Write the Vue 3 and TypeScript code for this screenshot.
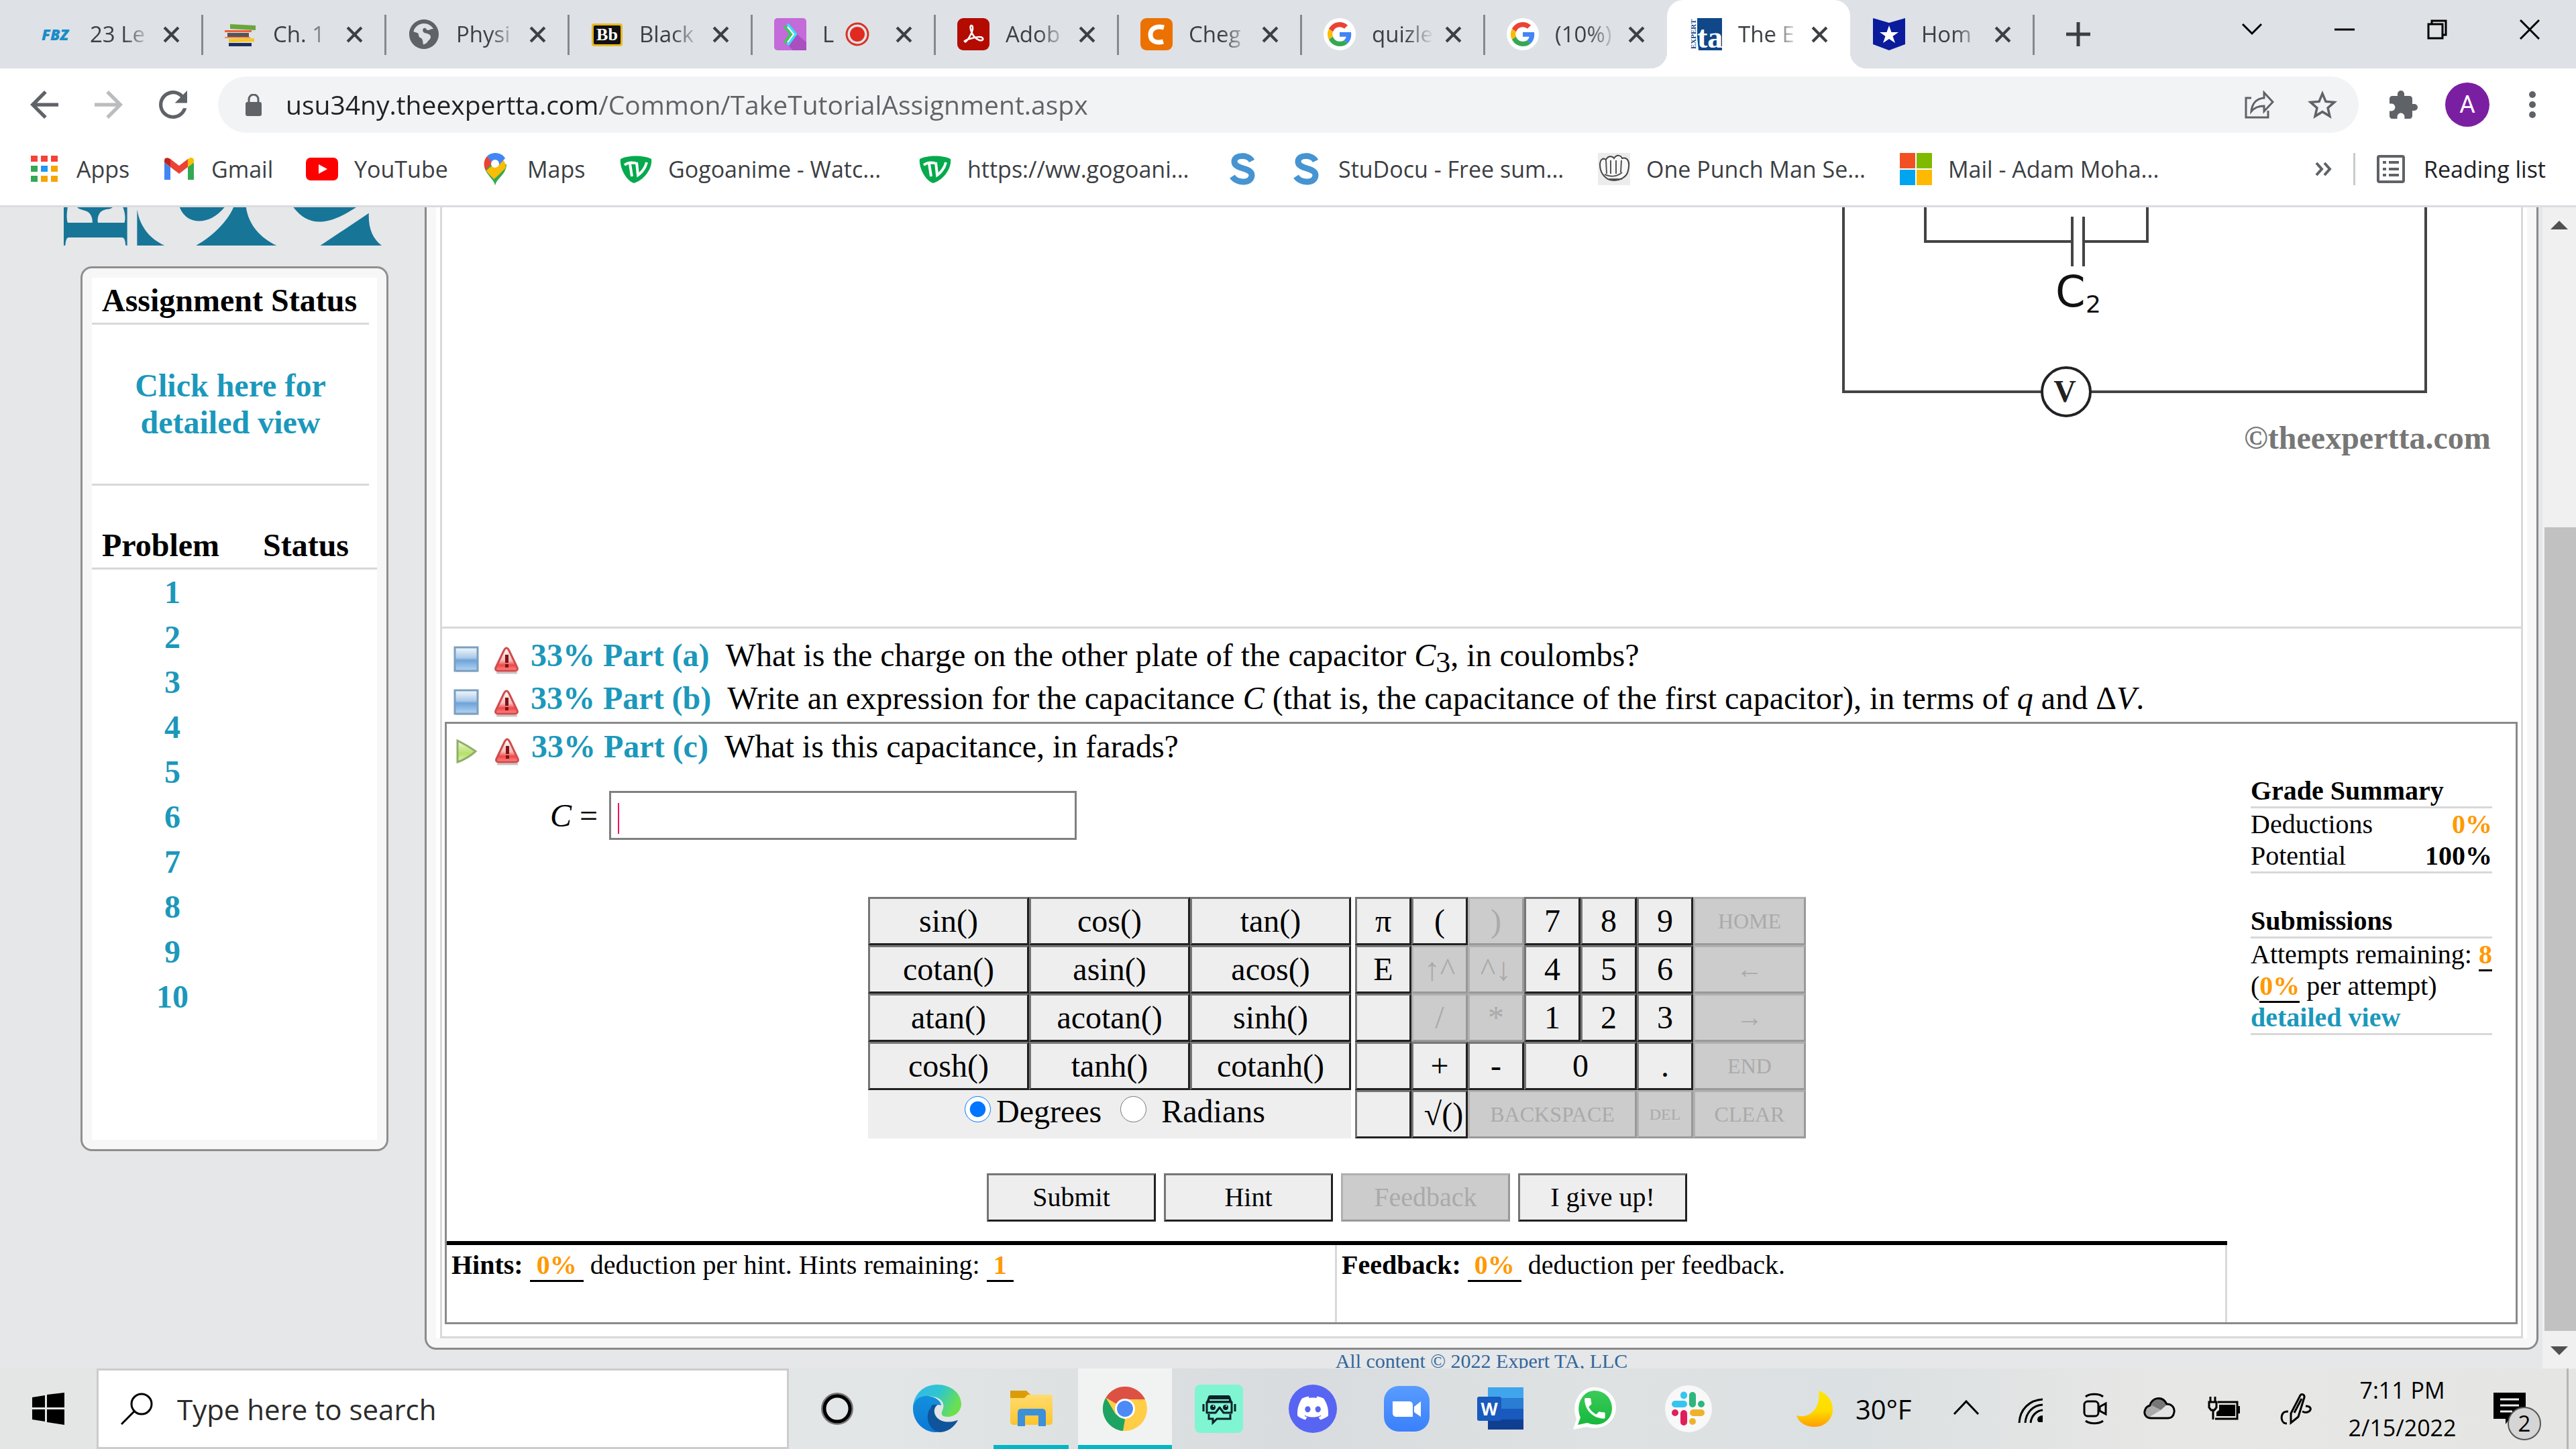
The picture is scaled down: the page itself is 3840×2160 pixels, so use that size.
<script setup lang="ts">
import { ref } from 'vue'

interface Tab { title: string; icon: string; active?: boolean; recording?: boolean }
interface Bookmark { label: string; icon: string; width: number }
interface Key { label: string; off?: boolean; span?: number; size?: string }

const tabs: Tab[] = [
  { title: '23 Le', icon: 'fbz' },
  { title: 'Ch. 1', icon: 'books' },
  { title: 'Physi', icon: 'globe' },
  { title: 'Black', icon: 'bb' },
  { title: 'L', icon: 'lens', recording: true },
  { title: 'Adob', icon: 'adobe' },
  { title: 'Cheg', icon: 'chegg' },
  { title: 'quizle', icon: 'google' },
  { title: '(10%)', icon: 'google' },
  { title: 'The E', icon: 'expert', active: true },
  { title: 'Hom', icon: 'badge' },
]

const bookmarks: Bookmark[] = [
  { label: 'Apps', icon: 'apps', width: 201 },
  { label: 'Gmail', icon: 'gmail', width: 213 },
  { label: 'YouTube', icon: 'youtube', width: 258 },
  { label: 'Maps', icon: 'maps', width: 210 },
  { label: 'Gogoanime - Watc...', icon: 'tv', width: 446 },
  { label: 'https://ww.gogoani...', icon: 'tv', width: 458 },
  { label: '', icon: 'studocu', width: 95 },
  { label: 'StuDocu - Free sum...', icon: 'studocu', width: 459 },
  { label: 'One Punch Man Se...', icon: 'fist', width: 450 },
  { label: 'Mail - Adam Moha...', icon: 'microsoft', width: 450 },
]

const functionRows: string[][] = [
  ['sin()', 'cos()', 'tan()'],
  ['cotan()', 'asin()', 'acos()'],
  ['atan()', 'acotan()', 'sinh()'],
  ['cosh()', 'tanh()', 'cotanh()'],
]

const keys: Key[] = [
  { label: 'π' }, { label: '(' }, { label: ')', off: true }, { label: '7' }, { label: '8' }, { label: '9' }, { label: 'HOME', off: true, size: 'small' },
  { label: 'E' }, { label: '↑^', off: true }, { label: '^↓', off: true }, { label: '4' }, { label: '5' }, { label: '6' }, { label: '←', off: true, size: 'arrow' },
  { label: '' }, { label: '/', off: true }, { label: '*', off: true }, { label: '1' }, { label: '2' }, { label: '3' }, { label: '→', off: true, size: 'arrow' },
  { label: '' }, { label: '+' }, { label: '-' }, { label: '0', span: 2 }, { label: '.' }, { label: 'END', off: true, size: 'small' },
  { label: '' }, { label: '\u00a0√()' }, { label: 'BACKSPACE', off: true, span: 3, size: 'small' }, { label: 'DEL', off: true, size: 'tiny' }, { label: 'CLEAR', off: true, size: 'small' },
]

const apps = [
  { icon: 'edge', name: 'Edge' },
  { icon: 'explorer', name: 'File Explorer', state: 'open' },
  { icon: 'chrome', name: 'Chrome', state: 'focused' },
  { icon: 'robot', name: 'Streamlabs' },
  { icon: 'discord', name: 'Discord' },
  { icon: 'zoom', name: 'Zoom' },
  { icon: 'word', name: 'Word' },
  { icon: 'whatsapp', name: 'WhatsApp' },
  { icon: 'slack', name: 'Slack' },
]

const trayIcons = ['caret', 'wifi', 'meet', 'cloud', 'battery']
const url = ref('usu34ny.theexpertta.com/Common/TakeTutorialAssignment.aspx')
const query = ref('')
const answer = ref('')
const angle = ref('deg')
</script>

<template>
  <div class="desktop">
    <svg class="sprite" width="0" height="0" aria-hidden="true">
      <defs>
        <linearGradient id="gBlue" x1="0" y1="0" x2="0" y2="1"><stop offset="0" stop-color="#f4f9fd" /><stop offset=".45" stop-color="#a9c8e8" /><stop offset=".55" stop-color="#6ea3d8" /><stop offset="1" stop-color="#b5d6f5" /></linearGradient>
        <linearGradient id="gWarn" x1="0" y1="0" x2="0" y2="1"><stop offset="0" stop-color="#fff" /><stop offset=".55" stop-color="#f7b9b9" /><stop offset=".75" stop-color="#f04848" /><stop offset="1" stop-color="#ff8a8a" /></linearGradient>
        <linearGradient id="gPlay" x1="0" y1="0" x2="0" y2="1"><stop offset="0" stop-color="#f1f8dc" /><stop offset=".6" stop-color="#b5e06a" /><stop offset="1" stop-color="#dff2b4" /></linearGradient>
        <linearGradient id="gEdgeA" x1="0" y1="0" x2="1" y2="0.4"><stop offset="0" stop-color="#35b4f0" /><stop offset=".55" stop-color="#2fc6cf" /><stop offset="1" stop-color="#6be04f" /></linearGradient>
        <linearGradient id="gEdgeB" x1="0" y1="0" x2="0" y2="1"><stop offset="0" stop-color="#1390dc" /><stop offset="1" stop-color="#0a78d6" /></linearGradient>
        <linearGradient id="gMoon" x1="0" y1="0" x2="0" y2="1"><stop offset="0" stop-color="#ffe600" /><stop offset=".55" stop-color="#ffdc00" /><stop offset="1" stop-color="#ff9d00" /></linearGradient>
        <linearGradient id="gZoom" x1="0" y1="0" x2="0" y2="1"><stop offset="0" stop-color="#589cff" /><stop offset="1" stop-color="#3a80fb" /></linearGradient>
        <linearGradient id="gWa" x1="0" y1="0" x2="0" y2="1"><stop offset="0" stop-color="#3ccb58" /><stop offset="1" stop-color="#16b83c" /></linearGradient>
        <linearGradient id="gFolder" x1="0" y1="0" x2="0" y2="1"><stop offset="0" stop-color="#ffdb70" /><stop offset="1" stop-color="#fdc52c" /></linearGradient>
      </defs>

      <symbol id="i-books" viewBox="0 0 48 48">
        <path d="M8 9l38 2v7L8 16z" fill="#6aa63c" /><path d="M0 18h40v3H0z" fill="#f0603a" /><path d="M4 22h32v6H4z" fill="#555" /><path d="M0 28h38v2H0z" fill="#f58a5a" /><path d="M6 31l38-1v5l-38 1z" fill="#f7c521" /><path d="M6 37h34v5H6z" fill="#1d2f5c" />
      </symbol>
      <symbol id="i-globe" viewBox="0 0 24 24"><path fill="#5f6368" d="M12 1C5.900 1 1 5.900 1 12s4.900 11 11 11 11-4.900 11-11S18.100 1 12 1zm0 3c3 0 5.500 1.500 7 4-2 0-3 1-4 1-1.500 0-1-2-3-1.500-1.500.5-1 3 .5 3.500 2 .5 4.500 1 4.500 3s-2 2.500-2.500 4c-1 1-2 1.500-3 1.700-.5-2-.2-3-1-4.200-.8-1-2.500-1-2.500-3S6 11 4.200 10C5 6.500 8.200 4 12 4z" /></symbol>
      <symbol id="i-bb" viewBox="0 0 48 48"><rect x="1" y="8" width="46" height="34" rx="4" fill="#e8b923" /><rect x="4" y="11" width="40" height="28" rx="2" fill="#111" /></symbol>
      <symbol id="i-lens" viewBox="0 0 48 48"><rect width="48" height="48" rx="5" fill="#c36bd8" /><path d="M22 42l12-18 14 12v12H28z" fill="#a94fc0" /><path d="M15 12l10 12-10 13" fill="none" stroke="#1fe03c" stroke-width="3" /><path d="M20 9l12 15-12 16" fill="none" stroke="#2ee6f5" stroke-width="4" /><path d="M20 13l9 11-9 12" fill="none" stroke="#fff" stroke-width="2" /></symbol>
      <symbol id="i-rec" viewBox="0 0 36 36"><circle cx="18" cy="18" r="16" fill="none" stroke="#d93025" stroke-width="3" /><circle cx="18" cy="18" r="11" fill="#e02a1f" /></symbol>
      <symbol id="i-adobe" viewBox="0 0 48 48"><rect width="48" height="48" rx="9" fill="#b30b00" /><path d="M11 36c4-2 9-10 11-16 2-5 1-9-1-9s-2 4 0 9c2 6 7 11 12 13 4 1 6-1 5-3-2-3-10-2-16 0-5 1-10 3-12 5" fill="none" stroke="#fff" stroke-width="2.500" /></symbol>
      <symbol id="i-chegg" viewBox="0 0 48 48"><rect width="48" height="48" rx="9" fill="#eb7100" /><path d="M35 14c-11-3-20 1-20 11 0 9 8 13 19 10" fill="none" stroke="#fff" stroke-width="7" /></symbol>
      <symbol id="i-google" viewBox="0 0 48 48"><circle cx="24" cy="24" r="24" fill="#fff" /><g transform="translate(6 6) scale(.75)">
        <path fill="#EA4335" d="M24 9.500c3.540 0 6.710 1.220 9.210 3.600l6.850-6.850C35.900 2.380 30.470 0 24 0 14.620 0 6.510 5.380 2.560 13.220l7.980 6.190C12.430 13.720 17.740 9.500 24 9.500z" />
        <path fill="#4285F4" d="M46.980 24.550c0-1.570-.15-3.090-.38-4.550H24v9.020h12.940c-.58 2.960-2.260 5.480-4.780 7.180l7.730 6c4.510-4.180 7.090-10.360 7.090-17.650z" />
        <path fill="#FBBC05" d="M10.530 28.590c-.48-1.450-.76-2.990-.76-4.590s.27-3.140.76-4.590l-7.980-6.190C.92 16.460 0 20.120 0 24c0 3.880.92 7.540 2.560 10.780l7.970-6.190z" />
        <path fill="#34A853" d="M24 48c6.480 0 11.930-2.130 15.890-5.810l-7.730-6c-2.150 1.450-4.920 2.300-8.160 2.300-6.260 0-11.570-4.220-13.470-9.910l-7.980 6.190C6.510 42.620 14.620 48 24 48z" /></g></symbol>
      <symbol id="i-expert" viewBox="0 0 48 48"><path d="M11 0h37v48H13l-2-20z" fill="#0f4788" /></symbol>
      <symbol id="i-badge" viewBox="0 0 48 48"><path d="M0 0l24 7 24-7v39l-24 9-24-9z" fill="#0a1c9c" /><path d="M24 11l3.500 10H38l-8.500 6 3.500 10-9-6-9 6 3.500-10L10 21h10.500z" fill="#fff" /></symbol>
      <symbol id="i-apps" viewBox="0 0 48 48">
        <path fill="#f44336" d="M4 4h10v9H4zM19 4h10v9H19zM34 4h10v9H34z" /><path fill="#34a853" d="M4 19h10v9H4zM4 34h10v9H4z" /><path fill="#2196f3" d="M19 19h10v9H19z" /><path fill="#f5a500" d="M34 19h10v9H34zM19 34h10v9H19zM34 34h10v9H34z" />
      </symbol>
      <symbol id="i-gmail" viewBox="0 0 48 48"><path fill="#4285f4" d="M2 40h9V21L2 14v23z" /><path fill="#34a853" d="M37 40h9V14l-9 7z" /><path fill="#ea4335" d="M11 21V9l13 10L37 9v12L24 31z" /><path fill="#fbbc04" d="M37 9v12l9-7v-3c0-4-4-5-7-3z" /><path fill="#c5221f" d="M2 14l9 7V9L9 8c-4-2-7 0-7 3z" /></symbol>
      <symbol id="i-youtube" viewBox="0 0 48 48"><rect y="7" width="48" height="34" rx="7" fill="#f00" /><path d="M19 17l13 7-13 7z" fill="#fff" /></symbol>
      <symbol id="i-maps" viewBox="0 0 48 48"><path fill="#34a853" d="M24 48C22 38 8 32 8 17h33c0 15-15 21-17 31z" /><path fill="#fbbc04" d="M11 26l22-18c7 5 9 12 4 20L22 39C18 34 13 31 11 26z" /><path fill="#34a853" d="M22 40l17-17c-1 10-13 15-15 25z" /><path fill="#ea4335" d="M12 5l9 8-11 13c-4-8-3-15 2-21z" /><path fill="#4285f4" d="M12 5C20-3 34-1 39 8L26 22z" /><circle cx="24" cy="16" r="6" fill="#fff" /></symbol>
      <symbol id="i-tv" viewBox="0 0 48 48"><path d="M1 9C12 3 36 3 47 9c2 15-12 32-26 36C10 42-1 22 1 9z" fill="#06a94d" /><path d="M7 18c5-4 9-4 17-3M15 16l3 19M25 14l2 19C34 28 38 22 40 14" fill="none" stroke="#fff" stroke-width="4" /></symbol>
      <symbol id="i-studocu" viewBox="0 0 48 48"><path d="M38 12C33 2 12 2 12 13c0 12 26 8 26 20 0 13-22 13-29 2" fill="none" stroke="#4694d1" stroke-width="9" /></symbol>
      <symbol id="i-fist" viewBox="0 0 48 48"><rect width="48" height="48" fill="#ececec" /><path d="M3 18c0-9 5-11 9-8 3-6 9-6 12-2 4-6 10-5 12 0 6-2 11 2 10 12-1 12-5 15-10 18-8 4-18 4-24-1C6 32 3 27 3 18z" fill="#f8f8f8" stroke="#444" stroke-width="2" /><path d="M12 11l1 20M19 11v20M27 11v20M35 11l-1 18M10 32c8 4 18 4 26-3M14 39h22" fill="none" stroke="#555" stroke-width="2" /></symbol>
      <symbol id="i-microsoft" viewBox="0 0 48 48"><path fill="#f25022" d="M0 0h23v23H0z" /><path fill="#7fba00" d="M25 0h23v23H25z" /><path fill="#00a4ef" d="M0 25h23v23H0z" /><path fill="#ffb900" d="M25 25h23v23H25z" /></symbol>

      <symbol id="i-stop" viewBox="0 0 38 42"><path d="M33 6v31H4" fill="none" stroke="#bbb" stroke-width="3" /><rect x="2" y="2" width="34" height="35" fill="url(#gBlue)" stroke="#7b9fc0" stroke-width="3" /></symbol>
      <symbol id="i-play" viewBox="0 0 38 42"><path d="M5 5c8 4 20 11 27 16-6 6-18 13-27 16z" fill="url(#gPlay)" stroke="#8fae6a" stroke-width="3" /></symbol>
      <symbol id="i-warn" viewBox="0 0 38 42"><path d="M4 40h31" stroke="#c9c3c3" stroke-width="3" /><path d="M19 3c2 0 3 2 4 4l12 25c1 3 0 5-3 5H6c-3 0-4-2-3-5L15 7c1-2 2-4 4-4z" fill="url(#gWarn)" stroke="#cf4c4c" stroke-width="3" /><path d="M17 13h5v12h-5zM17 27h5v5h-5z" fill="#7c1414" /></symbol>

      <symbol id="i-edge" viewBox="0 0 72 72">
        <path d="M36 0C16 0 1 14 0 34c5-12 18-18 30-16 14 2 18 12 14 20-3 6-1 10 7 10 12 0 21-8 21-20C71 12 56 0 36 0z" fill="url(#gEdgeA)" /><path d="M0 36C0 22 12 16 22 17c12 1 20 8 20 14-10-4-17 4-17 12 0 12 8 22 22 23-5 4-10 5-14 5C14 70 0 54 0 36z" fill="url(#gEdgeB)" /><path d="M29 30c-8 10-4 28 12 33 10 2 20-2 26-10-14 5-29 3-34-8-2-5-2-11 4-15z" fill="#10549c" /><path d="M25 36c-8 15 0 32 14 35 12 0 22-7 28-18C55 62 32 62 25 36z" fill="#10549c" />
      </symbol>
      <symbol id="i-explorer" viewBox="0 0 72 72"><path d="M5 9h24l6 6v12H5z" fill="#dc9c08" /><path d="M5 20h21l5-5h33c2 0 4 1 4 3v38c0 2-2 4-4 4H9c-2 0-4-2-4-4z" fill="url(#gFolder)" /><path d="M16 62V42c0-4 2-6 6-6h30c4 0 6 2 6 6v20H47V46H27v16z" fill="#3c8fd9" /></symbol>
      <symbol id="i-chrome" viewBox="0 0 72 72"><circle cx="36" cy="36" r="33" fill="#ffcd46" /><path d="M36 36L7.400 19.500A33 33 0 0 1 64.600 19.500L66 22H36z" fill="#dd5144" /><path d="M7.400 19.500L22 44l14 8-3 17A33 33 0 0 1 7.400 19.500z" fill="#1da462" /><circle cx="36" cy="36" r="15" fill="#fff" /><circle cx="36" cy="36" r="12" fill="#4c8bf5" /></symbol>
      <symbol id="i-robot" viewBox="0 0 72 72">
        <rect width="72" height="72" rx="8" fill="#80f5d2" />
        <path d="M17 27l3-9c1-2 2-2 4-2h25c2 0 3 0 4 2l3 9z" fill="#0b2229" /><path d="M22 23h29" stroke="#80f5d2" stroke-width="2" />
        <path d="M18 26h37v16H43l-6-8-6 8H18z" fill="#80f5d2" stroke="#0b2229" stroke-width="3" stroke-linejoin="round" />
        <path d="M13 29v11M60 29v11" stroke="#0b2229" stroke-width="3" />
        <circle cx="27" cy="34" r="4" fill="#0b2229" /><circle cx="46" cy="34" r="4" fill="#0b2229" /><circle cx="28" cy="32" r="1" fill="#fff" /><circle cx="47" cy="32" r="1" fill="#fff" />
        <path d="M21 44v7h6v6l6-6h20v-7" fill="none" stroke="#0b2229" stroke-width="3" />
      </symbol>
      <symbol id="i-discord" viewBox="0 0 72 72"><circle cx="36" cy="36" r="36" fill="#5865f2" /><path transform="translate(13 12) scale(1.920)" fill="#fff" d="M20.317 4.370a19.800 19.800 0 00-4.885-1.515.074.074 0 00-.079.037c-.211.375-.445.865-.608 1.250-1.845-.276-3.680-.276-5.487 0-.164-.393-.406-.874-.618-1.250a.077.077 0 00-.079-.037 19.740 19.740 0 00-4.885 1.515.070.070 0 00-.032.028C.533 9.046-.319 13.580.099 18.058a.082.082 0 00.031.056c2.053 1.508 4.041 2.423 5.993 3.029a.078.078 0 00.084-.028c.462-.630.873-1.295 1.226-1.994a.076.076 0 00-.042-.106c-.653-.248-1.274-.550-1.872-.892a.077.077 0 01-.008-.128c.126-.094.252-.192.372-.291a.074.074 0 01.078-.011c3.928 1.793 8.180 1.793 12.061 0a.074.074 0 01.079.010c.120.099.246.198.373.292a.077.077 0 01-.007.128 12.300 12.300 0 01-1.873.891.077.077 0 00-.041.107c.360.698.772 1.363 1.225 1.993a.076.076 0 00.084.029c1.961-.607 3.950-1.522 6.002-3.029a.077.077 0 00.031-.055c.500-5.177-.838-9.674-3.549-13.660a.061.061 0 00-.031-.029zM8.020 15.331c-1.183 0-2.157-1.086-2.157-2.419 0-1.333.956-2.419 2.157-2.419 1.211 0 2.176 1.095 2.157 2.419 0 1.333-.956 2.419-2.157 2.419zm7.975 0c-1.183 0-2.157-1.086-2.157-2.419 0-1.333.955-2.419 2.157-2.419 1.211 0 2.176 1.095 2.157 2.419 0 1.333-.946 2.419-2.157 2.419z" /></symbol>
      <symbol id="i-zoom" viewBox="0 0 72 72"><rect x="2" y="2" width="68" height="68" rx="22" fill="url(#gZoom)" /><path d="M15 25h24c4 0 6 2 6 6v17H21c-4 0-6-2-6-6zM47 33l10-8v23l-10-7z" fill="#fff" /></symbol>
      <symbol id="i-word" viewBox="0 0 72 72"><path d="M17 4h53v17H17z" fill="#41a5ee" /><path d="M17 20h53v16H17z" fill="#2b7cd3" /><path d="M17 36h53v16H17z" fill="#185abd" /><path d="M17 52h53v15H17z" fill="#103f91" /><rect x="1" y="18" width="36" height="36" rx="3" fill="#185abd" /></symbol>
      <symbol id="i-whatsapp" viewBox="0 0 72 72"><path d="M4 67l5-16C0 28 14 4 36 4c18 0 32 14 32 30 0 20-18 36-44 29z" fill="#fff" /><path d="M11 60l4-11C7 30 18 9 36 9c15 0 26 12 26 26 0 18-16 30-37 22z" fill="url(#gWa)" /><path transform="translate(16 15) scale(1.700)" fill="#fff" d="M6.620 10.790c1.440 2.830 3.760 5.140 6.590 6.590l2.200-2.200c.27-.27.67-.36 1.020-.24 1.120.37 2.330.57 3.570.57.55 0 1 .45 1 1V20c0 .55-.45 1-1 1-9.390 0-17-7.610-17-17 0-.55.45-1 1-1h3.500c.55 0 1 .45 1 1 0 1.250.2 2.450.57 3.570.11.35.03.74-.25 1.020l-2.200 2.200z" /></symbol>
      <symbol id="i-slack" viewBox="0 0 72 72"><circle cx="36" cy="36" r="35" fill="#f8f8f8" /><g stroke-width="10" stroke-linecap="round"><path d="M29 15.500v1M16 29h13" stroke="#36c5f0" /><path d="M42 16v13M55 29v0" stroke="#2eb67d" /><path d="M43 42h12M42 55v0" stroke="#ecb22e" /><path d="M29 43v13M16 42v0" stroke="#e01e5a" /></g></symbol>

      <symbol id="i-caret" viewBox="0 0 48 48"><path d="M6 32l18-19 18 19" fill="none" stroke="#000" stroke-width="3" /></symbol>
      <symbol id="i-wifi" viewBox="0 0 48 48"><g fill="none" stroke="#000" stroke-width="3"><path d="M7 45C8 25 22 11 42 10" /><path d="M16 45c1-15 11-26 26-27" /><path d="M24 45c1-10 8-18 18-19" /></g><path d="M42 34v10h-6c-4-3-2-10 6-10z" /></symbol>
      <symbol id="i-meet" viewBox="0 0 48 48"><g fill="none" stroke="#000" stroke-width="3"><rect x="8" y="13" width="21" height="22" rx="5" /><path d="M31 21l9-5v16l-9-5zM10 6c6-5 20-5 26 0M10 42c6 5 20 5 26 0" /></g></symbol>
      <symbol id="i-cloud" viewBox="0 0 48 48"><path d="M12 38C3 38 0 31 3 25c1-4 4-5 7-6C12 8 28 3 35 17c8 0 12 6 11 12-1 6-4 9-9 9z" fill="#e4e4e4" /><path d="M12 19C14 8 30 4 35 18l-9 8z" fill="#777" /><path d="M3 26c2-5 5-7 9-7l14 7L8 37C3 35 1 32 3 26z" fill="#aaa" /><path d="M12 38C3 38 0 31 3 25c1-4 4-5 7-6C12 8 28 3 35 17c8 0 12 6 11 12-1 6-4 9-9 9z" fill="none" stroke="#000" stroke-width="3" /></symbol>
      <symbol id="i-battery" viewBox="0 0 48 48"><path d="M15 14h29v25H11" fill="none" stroke="#000" stroke-width="3" /><path d="M17 18h24v17H13v-6l4-3zM45 20h3v11h-3z" /><path d="M4 6v8M11 6v8M2 14h11v8l-3 4H5l-3-4zM8 26v14" fill="none" stroke="#000" stroke-width="3" /></symbol>
      <symbol id="i-pen" viewBox="0 0 48 48"><g fill="none" stroke="#000" stroke-width="3"><path d="M17 31L31 4c2-3 7-1 6 3L28 36l-11 9z" /><path d="M22 30L33 9M11 46c-9 0-9-11-6-15 2-3 5-3 8-3M39 20c8 0 9 5 5 8-3 2-6 2-10 0" /></g></symbol>
    </svg>

    <header class="browser">
      <div class="tab-strip">
        <div v-for="(tab, i) in tabs" :key="i" class="tab" :class="{ active: tab.active, plain: tabs[i + 1]?.active }">
          <svg class="icon48" viewBox="0 0 48 48">
            <use v-if="tab.icon !== 'fbz'" :href="'#i-' + tab.icon" />
            <text v-if="tab.icon === 'fbz'" x="0" y="33" class="fbz">FBZ</text>
            <text v-if="tab.icon === 'bb'" x="24" y="33" class="bb">Bb</text>
            <template v-if="tab.icon === 'expert'">
              <text x="11" y="44" class="ta">ta</text>
              <text transform="translate(9 46) rotate(-90)" class="ex">EXPERT</text>
            </template>
          </svg>
          <span class="tab-title" :class="{ short: tab.recording }">{{ tab.title }}</span>
          <svg v-if="tab.recording" class="rec"><use href="#i-rec" /></svg>
          <button class="tab-close" aria-label="Close tab"><svg viewBox="0 0 24 24"><path d="M2 2l20 20M22 2L2 22" stroke="#3c4043" stroke-width="4" /></svg></button>
        </div>
        <button class="new-tab" aria-label="New tab"><svg viewBox="0 0 36 36"><path d="M18 0v36M0 18h36" stroke="#3c4043" stroke-width="5" /></svg></button>
        <div class="window-controls">
          <button aria-label="Search tabs"><svg viewBox="0 0 30 30"><path d="M1 7l14 14L29 7" fill="none" stroke="#000" stroke-width="3" /></svg></button>
          <button aria-label="Minimize"><svg viewBox="0 0 30 30"><path d="M0 15h30" stroke="#000" stroke-width="3" /></svg></button>
          <button aria-label="Restore"><svg viewBox="0 0 30 30"><path d="M2 7h21v21H2zM7 7V2h21v21h-5" fill="none" stroke="#000" stroke-width="3" /></svg></button>
          <button aria-label="Close"><svg viewBox="0 0 30 30"><path d="M1 1l28 28M29 1L1 29" stroke="#000" stroke-width="3" /></svg></button>
        </div>
      </div>

      <div class="toolbar">
        <button class="nav" aria-label="Back"><svg viewBox="4 4 16 16"><path fill="#5f6368" d="M20 11H7.830l5.590-5.590L12 4l-8 8 8 8 1.410-1.410L7.830 13H20v-2z" /></svg></button>
        <button class="nav" aria-label="Forward"><svg viewBox="4 4 16 16"><path fill="#babcbe" d="M12 4l-1.410 1.410L16.170 11H4v2h12.170l-5.580 5.590L12 20l8-8z" /></svg></button>
        <button class="nav" aria-label="Reload"><svg viewBox="4 4 16 16"><path fill="#5f6368" d="M17.650 6.350C16.200 4.900 14.210 4 12 4c-4.420 0-7.990 3.580-7.990 8s3.570 8 7.990 8c3.730 0 6.840-2.550 7.730-6h-2.080c-.82 2.330-3.040 4-5.650 4-3.310 0-6-2.690-6-6s2.690-6 6-6c1.660 0 3.140.69 4.220 1.780L13 11h7V4l-2.350 2.350z" /></svg></button>
        <div class="omnibox">
          <svg class="lock" viewBox="0 0 24 33"><path d="M5 13V8a7 7 0 0 1 14 0v5" fill="none" stroke="#5f6368" stroke-width="3" /><rect y="12" width="24" height="21" rx="3" fill="#5f6368" /></svg>
          <input v-model="url" class="url" type="text" aria-label="Address" />
          <button aria-label="Share"><svg viewBox="0 0 44 42"><path d="M10 11H2v29h33V30" fill="none" stroke="#5f6368" stroke-width="3" /><path d="M29 3v8C17 12 11 20 10 31c5-6 11-8 19-8v8l13-14z" fill="none" stroke="#5f6368" stroke-width="3" /></svg></button>
          <button aria-label="Bookmark this page"><svg viewBox="2 2 20 19"><path fill="#5f6368" d="M22 9.240l-7.190-.62L12 2 9.190 8.630 2 9.240l5.460 4.730L5.820 21 12 17.270 18.180 21l-1.630-7.030L22 9.240zM12 15.400l-3.760 2.270 1-4.280-3.320-2.880 4.380-.38L12 6.100l1.710 4.040 4.380.38-3.320 2.880 1 4.280L12 15.400z" /></svg></button>
        </div>
        <button class="puzzle" aria-label="Extensions"><svg viewBox="2 1 21 21"><path fill="#5f6368" d="M20.500 11H19V7c0-1.100-.9-2-2-2h-4V3.500a2.500 2.500 0 0 0-5 0V5H4c-1.100 0-2 .9-2 2v3.800h1.500c1.490 0 2.700 1.210 2.700 2.700S4.990 16.200 3.500 16.200H2V20c0 1.100.9 2 2 2h3.800v-1.500c0-1.490 1.210-2.700 2.700-2.700s2.700 1.210 2.700 2.700V22H17c1.100 0 2-.9 2-2v-4h1.500a2.500 2.500 0 0 0 0-5z" /></svg></button>
        <button class="avatar">A</button>
        <button class="dots" aria-label="Menu"><svg viewBox="0 0 10 40"><circle cx="5" cy="5" r="5" fill="#5f6368" /><circle cx="5" cy="20" r="5" fill="#5f6368" /><circle cx="5" cy="35" r="5" fill="#5f6368" /></svg></button>
      </div>

      <nav class="bookmarks">
        <a v-for="(b, i) in bookmarks" :key="i" href="#" :style="{ width: b.width + 'px' }" :aria-label="b.label || 'StuDocu'">
          <svg class="icon48"><use :href="'#i-' + b.icon" /></svg>{{ b.label }}
        </a>
        <button class="more" aria-label="More bookmarks"><svg viewBox="0 0 26 20"><path d="M2 1l8 9-8 9M14 1l8 9-8 9" fill="none" stroke="#5f6368" stroke-width="4" /></svg></button>
        <button class="reading"><svg viewBox="0 0 42 42"><rect x="2" y="2" width="38" height="38" rx="2" fill="none" stroke="#5f6368" stroke-width="4" /><path d="M9 11h5M18 11h15M9 21h5M18 21h15M9 30h5M18 30h15" stroke="#5f6368" stroke-width="4" /></svg>Reading list</button>
      </nav>
    </header>

    <div class="viewport">
      <aside class="side">
        <svg class="logo" viewBox="213 42 1062 129" preserveAspectRatio="none">
          <g fill="#177597">
            <path d="M213 42h13c-3 20-4 36 0 52h190c4-16 2-32-5-52h14v129h-5c-2-18-4-26-12-27H230c-8 0-10 10-12 27h-5z" /><path d="M258 42h118c-8 10-30 2-43 20-6 10-8 20-6 32h-18c0-12-2-24-12-34-12-10-30-8-39-18z" />
            <path d="M458 50c10 60 45 100 92 121h-92z" /><path d="M600 42c24 62 100 62 150 0z" /><path d="M780 42h42c8 60 50 105 102 129H655C710 140 760 90 780 42z" /><path d="M980 42c50 66 114 64 210 0z" /><path d="M1232 62c-2 50 12 85 43 109h-205z" />
          </g>
        </svg>
        <div class="status-box">
          <div class="status-inner">
            <h2>Assignment Status</h2>
            <div class="detail"><a href="#">Click here for<br />detailed view</a></div>
            <table>
              <thead><tr><th>Problem</th><th>Status</th></tr></thead>
              <tbody><tr v-for="n in 10" :key="n"><td><a href="#">{{ n }}</a></td><td></td></tr></tbody>
            </table>
          </div>
        </div>
      </aside>

      <main class="main">
        <div class="panel">
          <div class="panel-gap">
            <div class="panel-inner">
              <div class="figure">
                <svg viewBox="2740 309 980 400">
                  <g fill="none" stroke="#444" stroke-width="4">
                    <path d="M2748 300V584H3043M3117 584H3616V300" /><path d="M2870 300V360H3089M3106 360H3201V300" /><path d="M3089 323V397M3106 323V397" /><circle cx="3080" cy="584" r="36" stroke="#222" />
                  </g>
                  <text x="3064" y="457" class="cap">C</text><text x="3109" y="466" class="cap-sub">2</text>
                  <text x="3078" y="599" class="volt">V</text>
                  <text x="3345" y="669" class="credit">©theexpertta.com</text>
                </svg>
              </div>
              <div class="parts">
                <div class="part-row"><svg class="mark"><use href="#i-stop" /></svg><svg class="mark alert"><use href="#i-warn" /></svg><p><a href="#">33% Part (a)</a>What is the charge on the other plate of the capacitor <i>C</i><span class="sub">3</span>, in coulombs?</p></div>
                <div class="part-row"><svg class="mark"><use href="#i-stop" /></svg><svg class="mark alert"><use href="#i-warn" /></svg><p><a href="#">33% Part (b)</a>Write an expression for the capacitance <i>C</i> (that is, the capacitance of the first capacitor), in terms of <i>q</i> and Δ<i>V</i>.</p></div>
              </div>
              <section class="current">
                <div class="part-row"><svg class="mark"><use href="#i-play" /></svg><svg class="mark alert"><use href="#i-warn" /></svg><p><a href="#">33% Part (c)</a>What is this capacitance, in farads?</p></div>
                <div class="work">
                  <div class="entry">
                    <div class="answer">
                      <label for="answer"><i>C</i> =</label>
                      <div class="answer-box"><input id="answer" v-model="answer" type="text" /><span class="caret"></span></div>
                    </div>
                    <div class="keypad">
                      <div class="functions">
                        <template v-for="(row, r) in functionRows" :key="r"><button v-for="f in row" :key="f" class="key">{{ f }}</button></template>
                        <div class="angles">
                          <input id="deg" v-model="angle" type="radio" name="angle" value="deg" /><label for="deg" class="deg">Degrees</label>
                          <input id="rad" v-model="angle" type="radio" name="angle" value="rad" /><label for="rad" class="rad">Radians</label>
                        </div>
                      </div>
                      <div class="numbers">
                        <button v-for="(k, i) in keys" :key="i" class="key" :class="[k.size, k.span ? 'span' + k.span : '']" :disabled="k.off">{{ k.label }}</button>
                      </div>
                    </div>
                    <div class="actions">
                      <button class="key">Submit</button><button class="key">Hint</button><button class="key" disabled>Feedback</button><button class="key">I give up!</button>
                    </div>
                    <div class="notes">
                      <p><b>Hints:</b> <b class="value">0%</b> deduction per hint. Hints remaining: <b class="value">1</b></p>
                      <p><b>Feedback:</b> <b class="value">0%</b> deduction per feedback.</p>
                    </div>
                  </div>
                  <aside class="grade">
                    <h3>Grade Summary</h3>
                    <div class="facts">
                      <div class="fact"><span>Deductions</span><b class="orange">0%</b></div>
                      <div class="fact"><span>Potential</span><b>100%</b></div>
                    </div>
                    <h3>Submissions</h3>
                    <div class="facts">
                      <div>Attempts remaining: <b class="count">8</b></div>
                      <div>(<b class="count">0%</b> per attempt)</div>
                      <div><a href="#">detailed view</a></div>
                    </div>
                  </aside>
                </div>
              </section>
            </div>
          </div>
        </div>
        <footer>All content © 2022 Expert TA, LLC</footer>
      </main>

      <div class="scrollbar">
        <svg viewBox="0 0 26 13"><path d="M0 13L13 0l13 13z" fill="#505050" /></svg>
        <div class="track"><div class="thumb"></div></div>
        <svg viewBox="0 0 26 13"><path d="M0 0l13 13L26 0z" fill="#505050" /></svg>
      </div>
    </div>

    <div class="taskbar">
      <button class="start" aria-label="Start"><svg viewBox="0 0 48 48"><path d="M0 7l19-3v18H0zM22 3l26-3v22H22zM0 25h19v18L0 40zM22 25h26v23l-26-4z" /></svg></button>
      <div class="search">
        <svg viewBox="0 0 48 48"><circle cx="31" cy="17" r="15" fill="none" stroke="#000" stroke-width="3" /><path d="M20 28L1 47" stroke="#000" stroke-width="3" /></svg>
        <input v-model="query" type="text" placeholder="Type here to search" aria-label="Search" />
      </div>
      <button class="cortana" aria-label="Cortana"><svg viewBox="0 0 48 48"><circle cx="24" cy="24" r="22" fill="none" stroke="#777" stroke-width="4" /><circle cx="24" cy="24" r="19" fill="#e2e6e6" stroke="#000" stroke-width="5" /></svg></button>
      <button v-for="a in apps" :key="a.icon" class="app" :class="a.state" :aria-label="a.name">
        <svg viewBox="0 0 72 72"><use :href="'#i-' + a.icon" /><text v-if="a.icon === 'word'" x="19" y="46" class="word">W</text></svg>
      </button>
      <div class="tray">
        <button class="weather"><svg viewBox="0 0 54 54"><path d="M33 0c14 5 21 16 21 28 0 15-12 26-27 26C13 54 3 47 0 37c20 6 37-12 33-37z" fill="url(#gMoon)" /></svg>30°F</button>
        <button v-for="t in trayIcons" :key="t" class="tray-icon" :aria-label="t"><svg><use :href="'#i-' + t" /></svg></button>
        <button class="tray-icon pen" aria-label="Pen"><svg><use href="#i-pen" /></svg></button>
        <button class="clock"><span>7:11 PM</span><span>2/15/2022</span></button>
        <button class="notice" aria-label="Notifications"><svg viewBox="0 0 72 72"><path d="M0 0h48v39H24l-6 8v-8H0z" /><path d="M10 10h28M10 19h28M10 28h18" stroke="#eee" stroke-width="3" /><circle cx="46" cy="46" r="24" fill="#d5d5d5" stroke="#555" stroke-width="2" /></svg><span class="badge">2</span></button>
      </div>
    </div>
  </div>
</template>

<style>
body { margin: 0; }
</style>

<style scoped>
* { box-sizing: border-box; }
.desktop { display: flex; flex-direction: column; height: 100vh; overflow: hidden; font-family: "Open Sans", "Noto Sans", sans-serif; }
.sprite { position: absolute; }
button { border: 0; padding: 0; background: none; font: inherit; color: inherit; display: block; }
button svg { display: block; }
a { text-decoration: none; }
h2, h3, p { margin: 0; }
.icon48 { width: 48px; height: 48px; flex: none; }

.browser { flex: none; background: #fff; border-bottom: 3px solid #dadce0; }
.tab-strip { display: flex; align-items: center; height: 102px; padding-left: 28px; background: #dee1e6; }
.tab { position: relative; display: flex; align-items: center; width: 273px; height: 102px; padding: 0 33px 0 34px; flex: none; }
.tab::after { content: ""; position: absolute; right: -2px; top: 22px; width: 3px; height: 60px; background: #85888d; }
.tab.active::after, .tab.plain::after { display: none; }
.tab.active { background: #fff; border-radius: 24px 24px 0 0; }
.tab.active::before { content: ""; position: absolute; left: -24px; right: -24px; bottom: 0; height: 24px; background: radial-gradient(circle at 0 0, transparent 24px, #fff 24px) left / 24px 24px no-repeat, radial-gradient(circle at 100% 0, transparent 24px, #fff 24px) right / 24px 24px no-repeat; }
.tab-title { width: 90px; margin-left: 24px; flex: none; white-space: nowrap; font-size: 33px; line-height: 48px; color: #3c4043; -webkit-mask-image: linear-gradient(to right, #000 50px, transparent 92px); mask-image: linear-gradient(to right, #000 50px, transparent 92px); }
.tab-title.short { width: 22px; }
.fbz { font-weight: 800; font-style: italic; font-size: 23px; fill: #1b8cc8; }
.bb { font-family: "Liberation Serif", serif; font-weight: 700; font-size: 26px; text-anchor: middle; fill: #fff; }
.ta { font-family: "Liberation Serif", serif; font-weight: 700; font-size: 46px; fill: #fff; }
.ex { font-family: "Liberation Serif", serif; font-weight: 700; font-size: 11px; fill: #0f4788; }
.word { font-weight: 700; font-size: 26px; text-anchor: middle; fill: #fff; }
.rec { width: 36px; height: 36px; margin-left: 12px; }
.tab-close { margin-left: auto; }
.tab-close svg { width: 25px; height: 25px; }
.new-tab { margin-left: 49px; }
.new-tab svg { width: 36px; height: 36px; }
.window-controls { display: flex; align-items: center; margin: 0 0 14px auto; }
.window-controls button { width: 138px; }
.window-controls svg { width: 30px; height: 30px; margin: 0 auto; }

.toolbar { display: flex; align-items: center; height: 108px; padding: 0 60px 0 45px; }
.toolbar svg { width: 42px; height: 42px; }
.nav { margin-right: 54px; }
.nav:nth-child(3) { margin-right: 46px; }
.omnibox { display: flex; align-items: center; flex: 1; height: 84px; padding: 0 32px 0 41px; border-radius: 42px; background: #f1f3f4; }
.omnibox .lock { width: 24px; height: 33px; flex: none; }
.omnibox button { margin-left: 50px; }
.omnibox button svg { width: 44px; }
.url { flex: 1; min-width: 0; margin-left: 36px; padding: 0; border: 0; outline: 0; font: inherit; font-size: 39px; line-height: 60px; height: 60px; color: transparent; background: linear-gradient(to right, #202124 468px, #5f6368 468px); -webkit-background-clip: text; background-clip: text; }
.puzzle { margin-left: 46px; }
.avatar { width: 66px; height: 66px; margin: 0 59px 0 41px; border-radius: 50%; background: #7b1fa2; color: #fff; font-family: Roboto, sans-serif; font-size: 36px; text-align: center; }
.toolbar .dots svg { width: 10px; height: 40px; }

.bookmarks { display: flex; align-items: center; height: 96px; padding: 0 45px 12px 42px; font-size: 34px; color: #3c4043; }
.bookmarks a { display: flex; align-items: center; gap: 24px; flex: none; color: #3c4043; white-space: nowrap; }
.more { margin: 0 31px 0 auto; }
.more svg { width: 26px; height: 20px; }
.reading { display: flex; align-items: center; gap: 28px; height: 48px; padding-left: 32px; border-left: 3px solid #c8cacd; color: #202124; }
.reading svg { width: 42px; height: 42px; }

.viewport { display: flex; flex: 1; min-height: 0; overflow: hidden; background: #e5e7e9; font-family: "Liberation Serif", serif; color: #000; }
.side { width: 633px; flex: none; }
.logo { display: block; width: 474px; height: 57px; margin-left: 95px; }
.status-box { width: 459px; margin: 31px 0 0 120px; padding: 14px; border: 3px solid #8f8f8f; border-radius: 17px; background: #f7f7f7; }
.status-inner { min-height: 1285px; background: #fff; font-size: 48px; }
.status-inner h2 { margin-right: 12px; padding-left: 15px; border-bottom: 3px solid #d8d8d8; font-size: 48px; line-height: 67px; white-space: nowrap; }
.status-inner a { color: #1b98bb; font-weight: 700; }
.detail { margin: 0 12px 55px 0; padding: 63px 0 64px; border-bottom: 3px solid #d8d8d8; line-height: 55px; text-align: center; }
.status-inner table { width: 100%; border-collapse: collapse; line-height: 67px; }
.status-inner thead { border-bottom: 3px solid #d8d8d8; }
.status-inner th { padding: 0 0 0 15px; text-align: left; }
.status-inner th:first-child { width: 240px; }
.status-inner td { padding: 0; text-align: center; }

.main { flex: 1; min-width: 0; }
.panel { padding: 0 14px 14px; border: 3px solid #8a8a8a; border-top: 0; border-radius: 0 0 17px 17px; background: #f7f7f7; }
.panel-gap { padding: 0 6px; background: #fff; }
.panel-inner { padding-bottom: 18px; border: 3px solid #d9d9d9; border-top: 0; }
.figure { display: flex; justify-content: flex-end; align-items: flex-start; height: 628px; padding-right: 38px; border-bottom: 3px solid #d9d9d9; }
.figure svg { width: 980px; height: 400px; }
.cap { font-family: "DejaVu Sans", sans-serif; font-size: 64px; fill: #111; }
.cap-sub { font-family: "DejaVu Sans", sans-serif; font-size: 36px; fill: #111; }
.volt { font-size: 46px; font-weight: 700; text-anchor: middle; fill: #222; }
.credit { font-size: 48px; font-weight: 700; fill: #777; }
.parts { padding: 8px 0 3px 4px; }
.part-row { display: flex; align-items: center; height: 64px; padding-left: 13px; font-size: 48px; line-height: 64px; white-space: nowrap; }
.part-row a { margin-right: 24px; color: #1b98bb; font-weight: 700; }
.mark { width: 38px; height: 42px; margin-top: 13px; flex: none; }
.alert { margin: 13px 17px 0 22px; }
.sub { position: relative; top: 9px; line-height: 1px; font-size: 44px; }
.current { margin: 0 5px 0 4px; padding-top: 2px; border: 3px solid #8a8a8a; }
.current .part-row { padding-left: 11px; }
.work { display: flex; }
.entry { flex: 1; display: flex; flex-direction: column; }
.answer { display: flex; margin-top: 34px; padding-left: 154px; font-size: 48px; line-height: 73px; }
.answer label { width: 88px; }
.answer-box { position: relative; }
.answer-box input { display: block; width: 697px; height: 73px; padding: 0 12px; border: 3px solid #808080; outline: 0; font: inherit; }
.caret { position: absolute; left: 13px; top: 18px; width: 2px; height: 46px; background: #f0145a; }
.keypad { display: flex; justify-content: center; gap: 6px; margin-top: 85px; }
.functions { display: grid; grid-template-columns: repeat(3, 240px); grid-auto-rows: 72px; }
.numbers { display: grid; grid-template-columns: repeat(6, 84px) 168px; grid-auto-rows: 72px; }
.key { min-width: 0; border: 3px solid; border-color: #767676 #212121 #212121 #767676; background: #eee; color: #000; font-size: 48px; line-height: 60px; text-align: center; white-space: nowrap; }
.key:disabled { background: #ccc; border-color: #b0b0b0 #999 #999 #b0b0b0; color: #aaa; }
.key.small { font-size: 32px; }
.key.arrow { font-size: 40px; }
.key.tiny { font-size: 24px; }
.span2 { grid-column: span 2; }
.span3 { grid-column: span 3; }
.angles { grid-column: span 3; display: flex; padding-left: 144px; background: #eee; font-size: 48px; line-height: 64px; }
.angles input { width: 39px; height: 39px; margin: 9px 0 0; }
.angles .deg { margin: 0 28px 0 8px; }
.angles .rad { margin-left: 22px; }
.actions { display: flex; justify-content: center; gap: 12px; margin-top: 52px; }
.actions .key { width: 252px; height: 72px; font-size: 40px; }
.notes { display: flex; flex: 1; min-height: 121px; margin-top: 29px; border-top: 6px solid #000; font-size: 40px; line-height: 47px; }
.notes p { flex: 1; padding: 6px 0 0 7px; border-right: 3px solid #d9d9d9; }
.value { padding: 0 10px; border-bottom: 3px solid #000; color: #f90; }
.grade { width: 430px; flex: none; padding: 10px 35px 0; font-size: 40px; line-height: 47px; white-space: nowrap; }
.grade h3 { font-size: 40px; line-height: 47px; }
.facts { margin-bottom: 47px; border: solid #d8d8d8; border-width: 3px 0; }
.fact { display: flex; justify-content: space-between; }
.orange { color: #f90; }
.count { color: #f90; border-bottom: 3px solid #000; }
.facts a { color: #1b98bb; font-weight: 700; }
footer { font-size: 30px; line-height: 34px; text-align: center; color: #369; }

.scrollbar { display: flex; flex-direction: column; width: 50px; flex: none; margin-left: 6px; padding: 20px 0; background: #f0f0f0; }
.scrollbar svg { width: 26px; height: 13px; margin: 0 auto; flex: none; }
.track { flex: 1; display: flex; flex-direction: column; justify-content: flex-end; padding: 23px 0; }
.thumb { height: 74%; margin-left: 3px; background: #c1c1c1; }

.taskbar { display: flex; flex: none; height: 120px; background: linear-gradient(to right, #e3e6e4 0, #e2e6e6 34%, #d8dcde 50%, #dfe2e3 62%, #dbe0e2 72%, #e7e7e5 84%, #e5e6e4 100%); color: #000; }
.start { width: 144px; }
.start svg { width: 48px; height: 48px; margin: 0 auto; }
.search { display: flex; align-items: center; gap: 36px; width: 1032px; padding-left: 33px; border: 3px solid #ccc; background: #fff; }
.search svg { width: 48px; height: 48px; flex: none; }
.search input { flex: 1; padding: 0; border: 0; outline: 0; font: inherit; font-size: 42px; }
.search input::placeholder { color: #2b2b2b; opacity: 1; }
.cortana { width: 144px; margin-right: 7px; }
.cortana svg { width: 48px; height: 48px; margin: 0 auto; }
.app { position: relative; width: 140px; }
.app svg { width: 72px; height: 72px; margin: 0 auto; }
.app.open::after, .app.focused::after { content: ""; position: absolute; left: 14px; right: 14px; bottom: 0; height: 6px; background: #00b7c3; }
.app.focused { background: #f1f3f3; }
.app.focused::after { left: 0; right: 0; }
.tray { display: flex; align-items: center; margin: 0 11px 0 auto; border-right: 3px solid #b5b5b5; }
.weather { display: flex; align-items: center; gap: 34px; width: 205px; font-size: 40px; }
.weather svg { width: 54px; height: 54px; }
.tray-icon { width: 96px; }
.tray-icon svg { width: 48px; height: 48px; margin: 0 auto; }
.tray-icon.pen { width: 118px; }
.clock { display: flex; flex-direction: column; align-items: center; width: 200px; font-size: 34px; line-height: 56px; }
.notice { position: relative; width: 145px; padding-left: 36px; }
.notice svg { width: 72px; height: 72px; margin-top: 24px; }
.badge { position: absolute; left: 58px; bottom: 2px; width: 48px; font-size: 33px; line-height: 48px; text-align: center; }
</style>
